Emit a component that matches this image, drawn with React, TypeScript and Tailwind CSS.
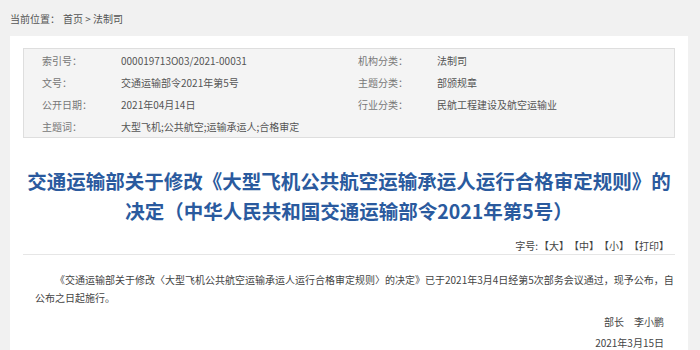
import React from "react";

const font = { fontFamily: '"Microsoft YaHei", "Noto Sans CJK SC", "Noto Sans", sans-serif' };

function Row({ l1, v1, l2, v2 }: { l1: string; v1: string; l2?: string; v2?: string }) {
  return (
    <div className="flex h-[22px] items-center text-[10px]">
      <div className="w-[79px] shrink-0 text-[#777]">{l1}</div>
      <div className="w-[237px] shrink-0 text-[#555]">{v1}</div>
      {l2 ? (
        <>
          <div className="w-[79px] shrink-0 text-[#777]">{l2}</div>
          <div className="text-[#555]">{v2}</div>
        </>
      ) : null}
    </div>
  );
}

export default function App() {
  return (
    <div className="h-[350px] w-[700px] overflow-hidden bg-[#f1f1f1]" style={font}>
      <div className="flex h-[36px] items-center pl-[10px] text-[10px] text-[#555]">
        <span>当前位置：</span>
        <span className="ml-[3px]">首页 &gt; 法制司</span>
      </div>
      <div className="ml-[10px] mr-[12px] bg-white px-[13px] pt-[12px] pb-[20px]">
        <div className="border border-[#dedede] bg-[#f4f4f4] pl-[18px]">
          <Row l1="索引号：" v1="000019713O03/2021-00031" l2="机构分类：" v2="法制司" />
          <Row l1="文号：" v1="交通运输部令2021年第5号" l2="主题分类：" v2="部颁规章" />
          <Row l1="公开日期：" v1="2021年04月14日" l2="行业分类：" v2="民航工程建设及航空运输业" />
          <Row l1="主题词：" v1="大型飞机;公共航空;运输承运人;合格审定" />
        </div>
        <h1 className="mt-[28px] flex flex-col items-center text-[19.5px] font-bold leading-[30px] text-[#2a5a9e]">
          <span className="whitespace-nowrap">交通运输部关于修改《大型飞机公共航空运输承运人运行合格审定规则》的</span>
          <span className="whitespace-nowrap">决定（中华人民共和国交通运输部令2021年第5号）</span>
        </h1>
        <div className="mt-[12px] flex h-[17px] items-start justify-end border-b border-[#e6e6e6] pr-[6px] text-[10px] text-[#444]">
          <span className="mr-[1px]">字号:</span>
          <span>【大】</span>
          <span>【中】</span>
          <span>【小】</span>
          <span>【打印】</span>
        </div>
        <p className="mt-[16px] mr-[-6px] pl-[12px] pr-0 text-[10px] leading-[18px] text-[#444] [text-indent:2em]">
          《交通运输部关于修改〈大型飞机公共航空运输承运人运行合格审定规则〉的决定》已于2021年3月4日经第5次部务会议通过，现予公布，自公布之日起施行。
        </p>
        <div className="mt-[6px] pr-[11px] text-right text-[10px] leading-[18px] text-[#444]">部长　李小鹏</div>
        <div className="mt-[3px] pr-[11px] text-right text-[10px] leading-[18px] text-[#444]">2021年3月15日</div>
      </div>
    </div>
  );
}
